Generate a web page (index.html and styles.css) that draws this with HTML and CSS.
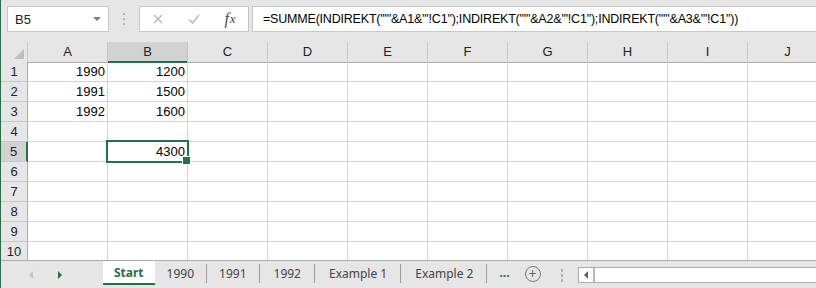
FILE: index.html
```html
<!DOCTYPE html>
<html lang="de">
<head>
  <meta charset="UTF-8" />
  <title>Mappe1 - Excel</title>
  <link rel="stylesheet" href="styles.css">
</head>
<body>
  <div class="app">
    <div class="formula-bar">
      <div class="name-box"><span>B5</span><span class="caret"></span></div>
      <div class="grip"><i></i><i></i><i></i></div>
      <div class="fx-buttons">
        <span class="fx-btn">
          <svg width="10" height="10" viewBox="0 0 10 10"><path d="M1 1L9 9M9 1L1 9" stroke="#b4b4b4" stroke-width="1.3" fill="none"/></svg>
        </span>
        <span class="fx-btn">
          <svg width="12" height="10" viewBox="0 0 12 10"><path d="M1 5.5L4.5 9L11 1" stroke="#b4b4b4" stroke-width="1.4" fill="none"/></svg>
        </span>
        <span class="fx-btn fx"><i>f</i><i class="x">x</i></span>
      </div>
      <div class="formula">=SUMME(INDIREKT("'"&amp;A1&amp;"'!C1");INDIREKT("'"&amp;A2&amp;"'!C1");INDIREKT("'"&amp;A3&amp;"'!C1"))</div>
    </div>

    <div class="sheet">
      <div class="row head">
        <div class="corner"><span class="tri"></span></div>
        <div>A</div><div class="on">B</div><div>C</div><div>D</div><div>E</div>
        <div>F</div><div>G</div><div>H</div><div>I</div><div>J</div>
      </div>
      <div class="row">
        <div class="rh">1</div><div class="c">1990</div><div class="c">1200</div>
        <div></div><div></div><div></div><div></div><div></div><div></div><div></div><div></div>
      </div>
      <div class="row">
        <div class="rh">2</div><div class="c">1991</div><div class="c">1500</div>
        <div></div><div></div><div></div><div></div><div></div><div></div><div></div><div></div>
      </div>
      <div class="row">
        <div class="rh">3</div><div class="c">1992</div><div class="c">1600</div>
        <div></div><div></div><div></div><div></div><div></div><div></div><div></div><div></div>
      </div>
      <div class="row">
        <div class="rh">4</div><div></div><div></div>
        <div></div><div></div><div></div><div></div><div></div><div></div><div></div><div></div>
      </div>
      <div class="row">
        <div class="rh on">5</div><div></div><div class="c sel">4300</div>
        <div></div><div></div><div></div><div></div><div></div><div></div><div></div><div></div>
      </div>
      <div class="row">
        <div class="rh">6</div><div></div><div></div>
        <div></div><div></div><div></div><div></div><div></div><div></div><div></div><div></div>
      </div>
      <div class="row">
        <div class="rh">7</div><div></div><div></div>
        <div></div><div></div><div></div><div></div><div></div><div></div><div></div><div></div>
      </div>
      <div class="row">
        <div class="rh">8</div><div></div><div></div>
        <div></div><div></div><div></div><div></div><div></div><div></div><div></div><div></div>
      </div>
      <div class="row">
        <div class="rh">9</div><div></div><div></div>
        <div></div><div></div><div></div><div></div><div></div><div></div><div></div><div></div>
      </div>
      <div class="row">
        <div class="rh">10</div><div></div><div></div>
        <div></div><div></div><div></div><div></div><div></div><div></div><div></div><div></div>
      </div>
    </div>

    <div class="tabbar">
      <div class="nav"><span class="prev"></span><span class="next"></span></div>
      <div class="tab active">Start</div>
      <div class="tab">1990</div>
      <div class="tab">1991</div>
      <div class="tab wide">1992</div>
      <div class="tab wide">Example 1</div>
      <div class="tab wide">Example 2</div>
      <div class="more">...</div>
      <div class="add">+</div>
      <div class="vgrip"><i></i><i></i><i></i></div>
      <div class="hscroll"><span class="left"><b></b></span></div>
    </div>
  </div>
</body>
</html>
```

FILE: styles.css
```css
* {
  box-sizing: border-box;
}

body {
  margin: 0;
  background: #e6e6e6;
  font-family: "Liberation Sans", Arial, sans-serif;
}

.app {
  width: 816px;
  height: 288px;
  overflow: hidden;
  border-left: 1px solid #217346;
  display: flex;
  flex-direction: column;
}

/* formula bar */

.formula-bar {
  height: 42px;
  flex: none;
  display: flex;
  align-items: flex-start;
  padding: 6px 0 0 6px;
}

.name-box {
  width: 102px;
  height: 26px;
  background: #fff;
  border: 1px solid #c6c6c6;
  display: flex;
  align-items: center;
  justify-content: space-between;
  padding: 0 7px;
  font-size: 13px;
  color: #222;
}

.caret {
  border-left: 4px solid transparent;
  border-right: 4px solid transparent;
  border-top: 4px solid #7a7a7a;
}

.grip {
  width: 30px;
  height: 26px;
  display: flex;
  flex-direction: column;
  align-items: center;
  justify-content: center;
  gap: 3px;
}

.grip i {
  width: 2px;
  height: 2px;
  background: #b5b5b5;
}

.fx-buttons {
  width: 110px;
  height: 26px;
  background: #fff;
  border: 1px solid #c6c6c6;
  display: flex;
}

.fx-btn {
  width: 36px;
  display: flex;
  align-items: center;
  justify-content: center;
}

.fx {
  font-family: "Liberation Serif", serif;
  color: #4a4a4a;
  font-size: 16px;
}

.fx .x {
  font-size: 13px;
  margin-left: 1px;
}

.formula {
  flex: 1;
  margin-left: 3px;
  height: 26px;
  background: #fff;
  border: 1px solid #c6c6c6;
  border-right: none;
  padding-left: 10px;
  font-size: 12.5px;
  letter-spacing: -0.2px;
  line-height: 24px;
  white-space: nowrap;
  color: #000;
}

/* grid */

.sheet {
  height: 218px;
  flex: none;
  overflow: hidden;
  background: #fff;
  font-size: 13px;
}

.row {
  display: grid;
  grid-template-columns: 27px repeat(10, 80px);
  height: 20px;
}

.row > div {
  border-right: 1px solid #d4d4d4;
  border-bottom: 1px solid #d4d4d4;
  line-height: 19px;
}

.head > div {
  background: #e6e6e6;
  border-right-color: #c6c6c6;
  border-bottom-color: #ababab;
  text-align: center;
  color: #222;
}

.head .on {
  background: #d2d2d2;
  border-bottom: 2px solid #217346;
}

.corner {
  display: flex;
  align-items: flex-end;
  justify-content: flex-end;
  padding: 0 3px 3px 0;
}

.tri {
  width: 0;
  height: 0;
  border-left: 10px solid transparent;
  border-bottom: 10px solid #bdbdbd;
}

.row > .rh {
  background: #e6e6e6;
  border-right-color: #ababab;
  border-bottom-color: #c8c8c8;
  text-align: center;
  color: #222;
}

.row > .rh.on {
  background: #d2d2d2;
  border-right: 2px solid #217346;
}

.c {
  text-align: right;
  padding-right: 2px;
}

.sel {
  position: relative;
}

.sel::before {
  content: "";
  position: absolute;
  top: -2px;
  left: -2px;
  right: -2px;
  bottom: -2px;
  border: 2px solid #217346;
}

.sel::after {
  content: "";
  position: absolute;
  right: -4px;
  bottom: -4px;
  width: 7px;
  height: 7px;
  background: #217346;
  border: 1px solid #fff;
}

/* sheet tabs */

.tabbar {
  height: 28px;
  flex: none;
  border-top: 1px solid #ababab;
  display: flex;
  align-items: flex-start;
  font-family: "Noto Sans", sans-serif;
  font-size: 12px;
  color: #444;
}

.nav {
  width: 102px;
  height: 27px;
  display: flex;
  align-items: center;
  gap: 25px;
  padding-left: 28px;
}

.prev {
  border-top: 4px solid transparent;
  border-bottom: 4px solid transparent;
  border-right: 4px solid #c4c4c4;
}

.next {
  border-top: 4px solid transparent;
  border-bottom: 4px solid transparent;
  border-left: 4px solid #217346;
}

.tab {
  height: 19px;
  margin-top: 3px;
  padding: 0 12px;
  border-right: 1px solid #9d9d9d;
  line-height: 19px;
  white-space: nowrap;
}

.tab.wide {
  padding: 0 13px 0 14px;
}

.tab.active {
  height: 24px;
  margin-top: 0;
  padding: 0 11px;
  background: #fff;
  color: #217346;
  font-weight: bold;
  border-right: none;
  border-bottom: 2px solid #217346;
  line-height: 23px;
}

.more {
  margin-left: 12px;
  color: #217346;
  font-weight: bold;
  line-height: 24px;
}

.add {
  width: 16px;
  height: 16px;
  margin: 5px 0 0 15px;
  border: 1px solid #777;
  border-radius: 50%;
  color: #666;
  font-size: 14px;
  line-height: 13px;
  text-align: center;
}

.vgrip {
  display: flex;
  flex-direction: column;
  gap: 2px;
  margin: 8px 0 0 20px;
}

.vgrip i {
  width: 2px;
  height: 3px;
  background: #b0b0b0;
}

.hscroll {
  flex: 1;
  height: 16px;
  margin: 6px 0 0 15px;
  background: #fff;
  border: 1px solid #ababab;
  border-right: none;
  display: flex;
}

.hscroll .left {
  width: 16px;
  border-right: 2px solid #b8b8b8;
  display: flex;
  align-items: center;
  justify-content: center;
}

.hscroll .left b {
  border-top: 4px solid transparent;
  border-bottom: 4px solid transparent;
  border-right: 4px solid #606060;
}
```
